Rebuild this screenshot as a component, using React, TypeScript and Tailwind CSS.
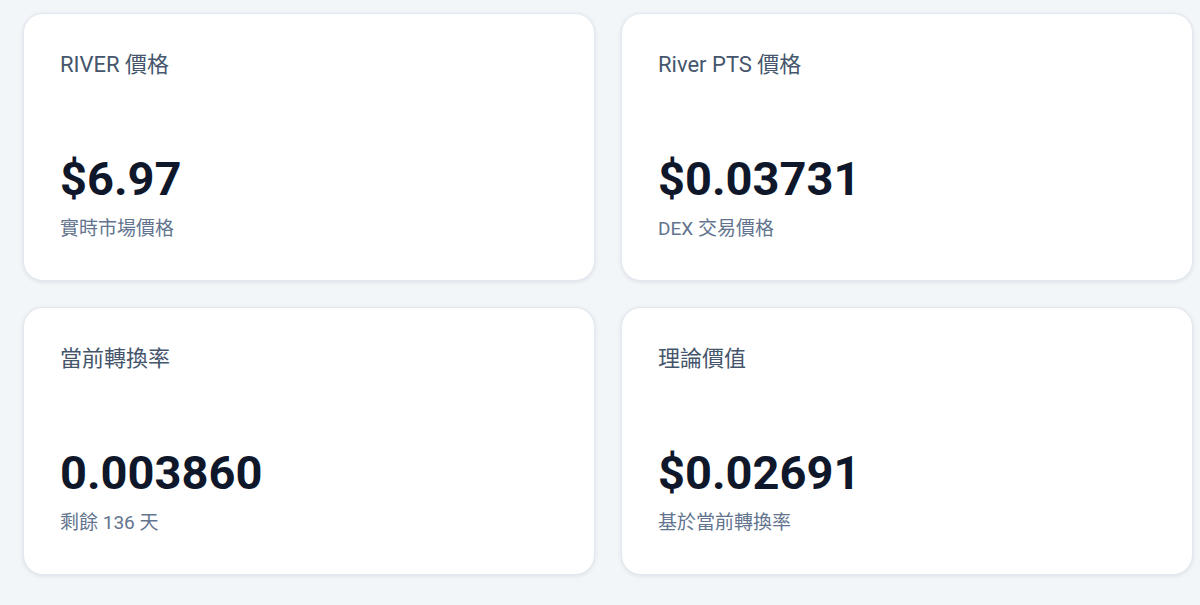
import React from "react"

// Tarjetas de precio: título arriba, valor grande y nota abajo
type Stat = { title: string; value: string; note: string }

const stats: Stat[] = [
  { title: "RIVER 價格", value: "$6.97", note: "實時市場價格" },
  { title: "River PTS 價格", value: "$0.03731", note: "DEX 交易價格" },
  { title: "當前轉換率", value: "0.003860", note: "剩餘 136 天" },
  { title: "理論價值", value: "$0.02691", note: "基於當前轉換率" },
]

function StatCard({ title, value, note }: Stat) {
  return (
    <div className="flex h-[268px] flex-col justify-between rounded-[20px] border border-slate-200 bg-white px-9 pt-9 pb-[37px] shadow-[0_1px_4px_rgba(15,23,42,0.1)]">
      <div className="text-[22px] leading-[30px] text-slate-600">{title}</div>
      <div>
        <div className="text-[47px] leading-none font-bold text-slate-900">{value}</div>
        <div className="mt-[13px] text-[19px] leading-7 text-slate-500">{note}</div>
      </div>
    </div>
  )
}

export default function App() {
  return (
    <div
      className="min-h-[605px] bg-[#f3f6f9] pt-[13px] pr-[7px] pl-[23px]"
      style={{ fontFamily: 'Roboto, "Noto Sans CJK TC", sans-serif' }}
    >
      <div className="grid grid-cols-2 gap-[26px]">
        {stats.map((s) => (
          <StatCard key={s.title} {...s} />
        ))}
      </div>
    </div>
  )
}
